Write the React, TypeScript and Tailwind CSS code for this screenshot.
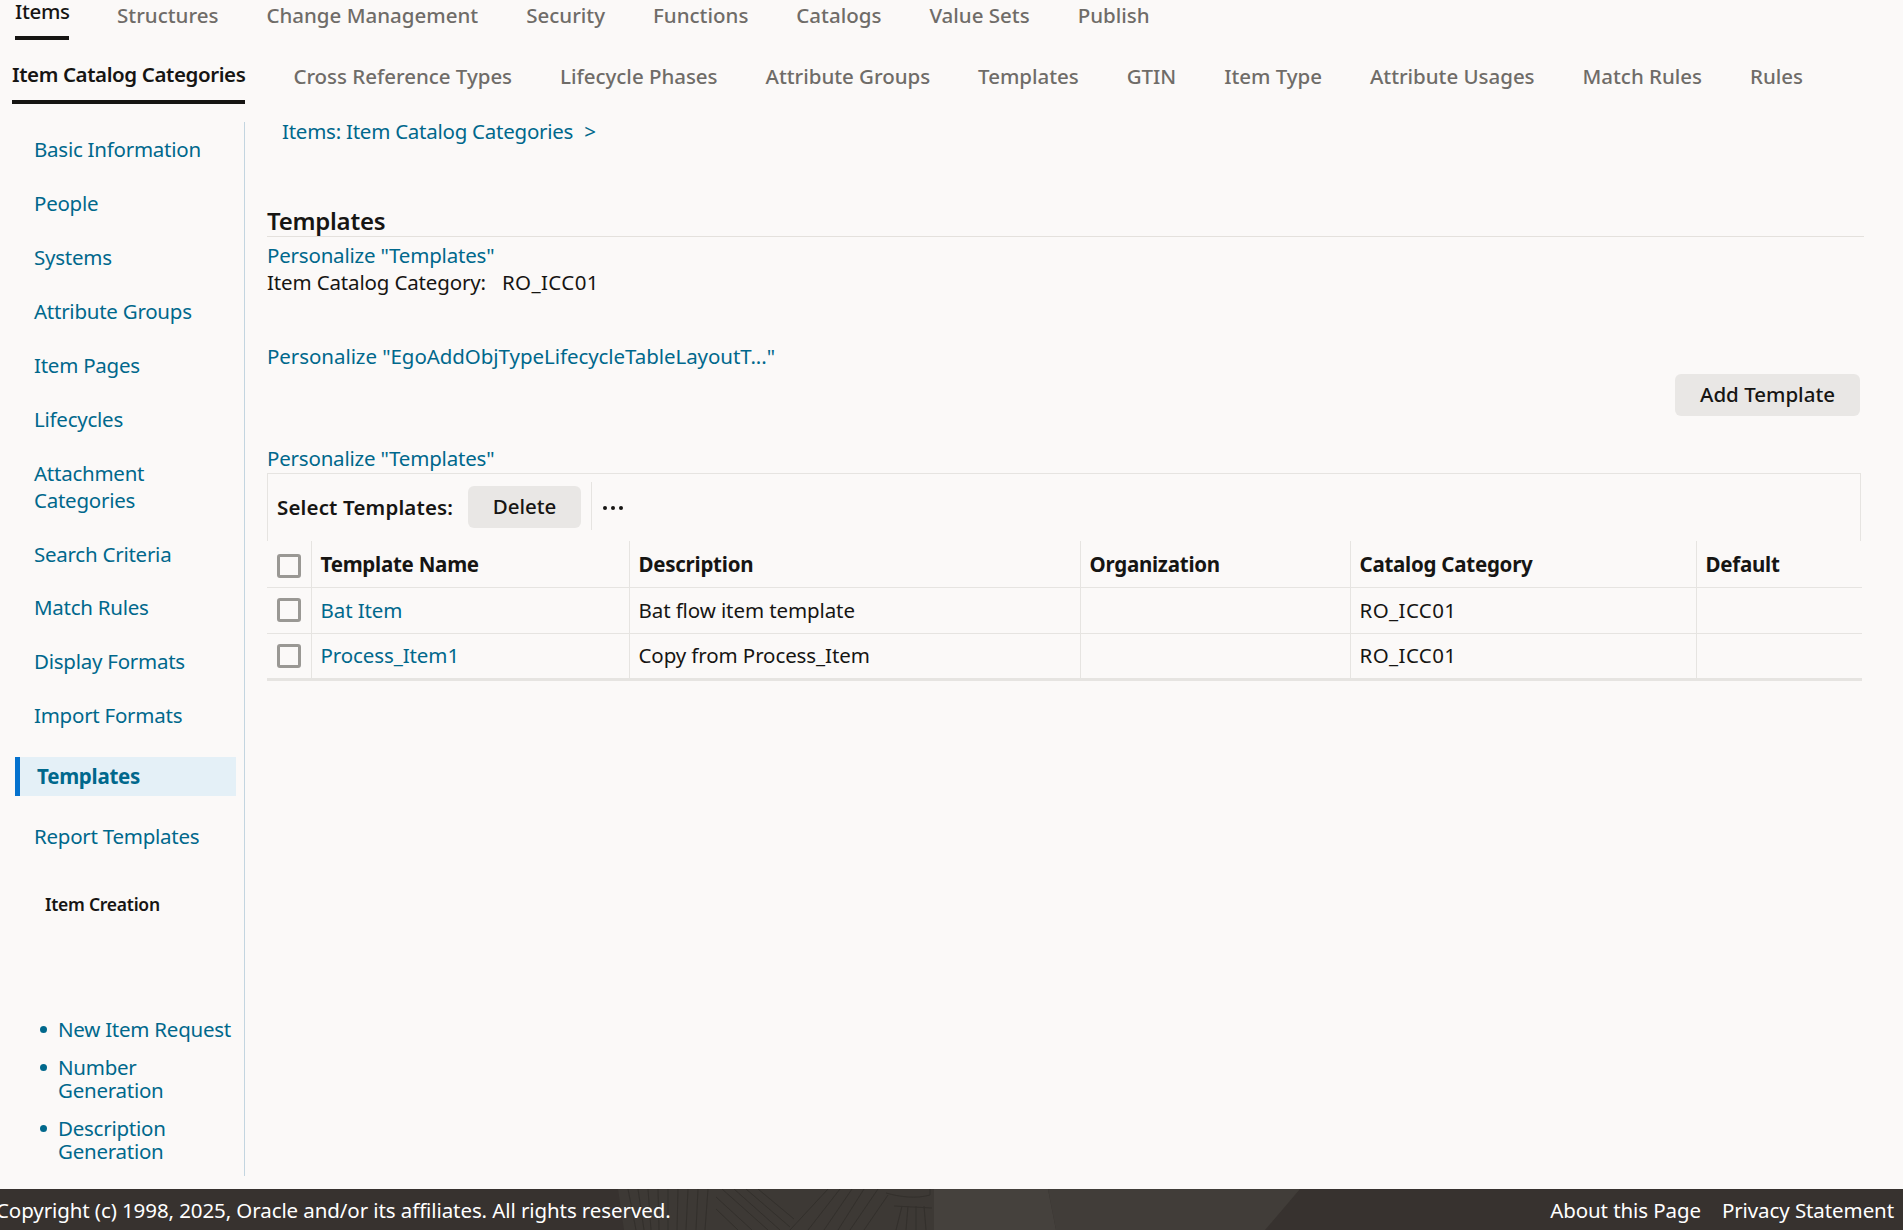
const topTabs = ["Structures", "Change Management", "Security", "Functions", "Catalogs", "Value Sets", "Publish"];
const subTabs = [
  "Cross Reference Types",
  "Lifecycle Phases",
  "Attribute Groups",
  "Templates",
  "GTIN",
  "Item Type",
  "Attribute Usages",
  "Match Rules",
  "Rules",
];
const navTop = [
  "Basic Information",
  "People",
  "Systems",
  "Attribute Groups",
  "Item Pages",
  "Lifecycles",
  "Attachment Categories",
  "Search Criteria",
  "Match Rules",
  "Display Formats",
  "Import Formats",
];
const rows = [
  { name: "Bat Item", description: "Bat flow item template", category: "RO_ICC01" },
  { name: "Process_Item1", description: "Copy from Process_Item", category: "RO_ICC01" },
];

function Checkbox() {
  return <span className="block h-[24px] w-[24px] rounded-[3px] border-[3px] border-[#9a9894] bg-[#fbf9f8]" />;
}

function Personalize({ label }: { label: string }) {
  return <a className="block tracking-[-0.2px] text-[#00688c]">{label}</a>;
}

// faint woven pattern behind the footer, x runs from 600 to 1320 on the page
function FooterArt() {
  return (
    <svg className="absolute left-[600px] top-0 h-[41px] w-[720px]" viewBox="0 0 720 41" fill="none">
      <path d="M18 0H334V41H24Z" fill="#3d3935" />
      <path d="M334 0H448L456 41H334Z" fill="#45413d" />
      <path d="M448 0H700L665 41H456Z" fill="#413d39" />
      <g stroke="#312e2a" strokeWidth="1" opacity="0.8">
        <path d="M28 0l8 41M38 0l6 41M48 0l3 41M58 0l1 41M68 0l0 41M78 0l-1 41M88 0l-2 41M98 0l-2 41M108 0l-3 41" />
        <path d="M122 0l46 41M134 0l46 41M146 0l44 38M158 0l36 30M116 8l36 33M116 20l22 21" />
        <path d="M228 0l-38 41M240 0l-32 41M252 0l-28 41M264 0l-26 41M278 0l-28 41M288 6l-24 35" />
        <path d="M296 41l6-24M306 41l2-24M316 41l0-24M326 41l-2-24M294 17l38 2" />
        <path d="M286 4c14 4 30 6 44 2M330 6V0" />
      </g>
    </svg>
  );
}

export default function App() {
  return (
    <div className="flex h-[1230px] flex-col overflow-hidden bg-[#fbf9f8] text-[20.5px] text-[#161513] [font-family:'Noto_Sans',sans-serif]">
      <div className="flex h-[40px] gap-[48px] pl-[15px] tracking-[0px] text-[#6f6c68]">
        <a className="h-[40px] w-[54px] border-b-4 border-[#161513] leading-[23px] font-medium tracking-[-0.3px] text-[#161513]">Items</a>
        {topTabs.map((tab) => (
          <a key={tab} className="pt-[1px] leading-[28px] font-medium">
            {tab}
          </a>
        ))}
      </div>

      <div className="mt-[8px] flex h-[56px] gap-[48px] pl-[12px] tracking-[-0.03px] text-[#6f6c68]">
        <a className="h-[56px] border-b-4 border-[#161513] pt-[12px] leading-[28px] font-semibold tracking-[-0.4px] text-[#161513]">
          Item Catalog Categories
        </a>
        {subTabs.map((tab) => (
          <a key={tab} className="pt-[14px] leading-[28px] font-medium">
            {tab}
          </a>
        ))}
      </div>

      <div className="mt-[18px] flex h-[1054px] tracking-[-0.25px]">
        <aside className="w-[245px] shrink-0 border-r border-[#c3d5e0] pt-[1px] leading-[27px] text-[#00688c]">
          {navTop.map((item) => (
            <a key={item} className="block py-[13.45px] pr-[20px] pl-[34px]">
              {item}
            </a>
          ))}
          <a className="mt-[14px] ml-[15px] block h-[39px] w-[221px] border-l-[5px] border-[#0572ce] bg-[#e4f0f7] pl-[17px] leading-[39px] font-bold">
            Templates
          </a>
          <a className="mt-[14px] block py-[13.45px] pl-[34px]">Report Templates</a>
          <p className="mt-[27.5px] pl-[45px] text-[17.5px] font-semibold text-[#161513]">Item Creation</p>
          <ul className="mt-[99.5px] leading-[23px]">
            <li className="flex pl-[40px]">
              <span className="mt-[8px] mr-[11px] h-[7px] w-[7px] shrink-0 rounded-full bg-[#00688c]" />
              New Item Request
            </li>
            <li className="mt-[15px] flex pl-[40px]">
              <span className="mt-[8px] mr-[11px] h-[7px] w-[7px] shrink-0 rounded-full bg-[#00688c]" />
              <span className="w-[130px]">Number Generation</span>
            </li>
            <li className="mt-[15px] flex pl-[40px]">
              <span className="mt-[8px] mr-[11px] h-[7px] w-[7px] shrink-0 rounded-full bg-[#00688c]" />
              <span className="w-[130px]">Description Generation</span>
            </li>
          </ul>
        </aside>

        <main className="min-w-0 flex-1 pl-[22px] leading-[27px]">
          <a className="-mt-[4px] block pl-[15px] text-[#00688c]">
            Items: Item Catalog Categories<span className="ml-[11px]">&gt;</span>
          </a>
          <div className="mt-[60px] w-[1597px] border-b border-[#e4e1dd]">
            <h2 className="text-[24px] leading-[31px] font-semibold">Templates</h2>
          </div>
          <div className="mt-[5px]">
            <Personalize label={'Personalize "Templates"'} />
          </div>
          <p className="tracking-[-0.15px]">
            Item Catalog Category:<span className="ml-[16px] tracking-[0.4px]">RO_ICC01</span>
          </p>
          <div className="mt-[47px] tracking-[-0.06px]">
            <a className="block text-[#00688c]">Personalize "EgoAddObjTypeLifecycleTableLayoutT..."</a>
          </div>
          <div className="flex w-[1593px] justify-end">
            <button className="mt-[4px] h-[42px] w-[185px] rounded-[6px] bg-[#e9e7e5] pb-[2px] font-medium tracking-normal">Add Template</button>
          </div>
          <div className="mt-[29px]">
            <Personalize label={'Personalize "Templates"'} />
          </div>

          <div className="mt-[1px] flex h-[68px] w-[1594px] items-center border-x border-t border-[#e6e4e1]">
            <span className="ml-[9px] w-[191px] shrink-0 font-semibold tracking-[0.15px]">Select Templates:</span>
            <button className="mt-[-2px] h-[42px] w-[113px] rounded-[6px] bg-[#e9e7e5] font-medium tracking-normal">Delete</button>
            <span className="mt-[-4px] ml-[10px] h-[48px] border-l border-[#e6e4e1]" />
            <span className="ml-[11px] flex gap-[4px]">
              <i className="block h-[4px] w-[4px] rounded-full bg-[#161513]" />
              <i className="block h-[4px] w-[4px] rounded-full bg-[#161513]" />
              <i className="block h-[4px] w-[4px] rounded-full bg-[#161513]" />
            </span>
          </div>

          <table className="w-[1595px] table-fixed border-collapse border-b-[3px] border-[#e6e4e1]">
            <colgroup>
              <col className="w-[44px]" />
              <col className="w-[318px]" />
              <col className="w-[451px]" />
              <col className="w-[270px]" />
              <col className="w-[346px]" />
              <col />
            </colgroup>
            <thead>
              <tr className="h-[46px] border-b border-[#e6e4e1] text-left">
                <th className="pt-[4px] pl-[10px] font-normal">
                  <Checkbox />
                </th>
                <th className="border-l border-[#e6e4e1] pt-[2px] pl-[9px] font-bold">Template Name</th>
                <th className="border-l border-[#e6e4e1] pt-[2px] pl-[9px] font-bold">Description</th>
                <th className="border-l border-[#e6e4e1] pt-[2px] pl-[9px] font-bold">Organization</th>
                <th className="border-l border-[#e6e4e1] pt-[2px] pl-[9px] font-bold">Catalog Category</th>
                <th className="border-l border-[#e6e4e1] pt-[2px] pl-[9px] font-bold">Default</th>
              </tr>
            </thead>
            <tbody className="tracking-[-0.1px]">
              {rows.map((row, i) => (
                <tr key={row.name} className={i === 0 ? "h-[46px] border-b border-[#e6e4e1]" : "h-[46px]"}>
                  <td className="pl-[10px]">
                    <Checkbox />
                  </td>
                  <td className="border-l border-[#e6e4e1] pl-[9px] text-[#00688c]">{row.name}</td>
                  <td className="border-l border-[#e6e4e1] pl-[9px]">{row.description}</td>
                  <td className="border-l border-[#e6e4e1]" />
                  <td className="border-l border-[#e6e4e1] pl-[9px] tracking-[0.4px]">{row.category}</td>
                  <td className="border-l border-[#e6e4e1]" />
                </tr>
              ))}
            </tbody>
          </table>
        </main>
      </div>

      <footer className="relative mt-[13px] flex h-[41px] items-center justify-between overflow-hidden bg-[#37322f] pr-[9px] tracking-[-0.09px] text-white">
        <FooterArt />
        <span className="relative -ml-[4px] pt-[2px]">Copyright (c) 1998, 2025, Oracle and/or its affiliates. All rights reserved.</span>
        <span className="relative flex gap-[21px] pt-[2px]">
          <a>About this Page</a>
          <a>Privacy Statement</a>
        </span>
      </footer>
    </div>
  );
}
